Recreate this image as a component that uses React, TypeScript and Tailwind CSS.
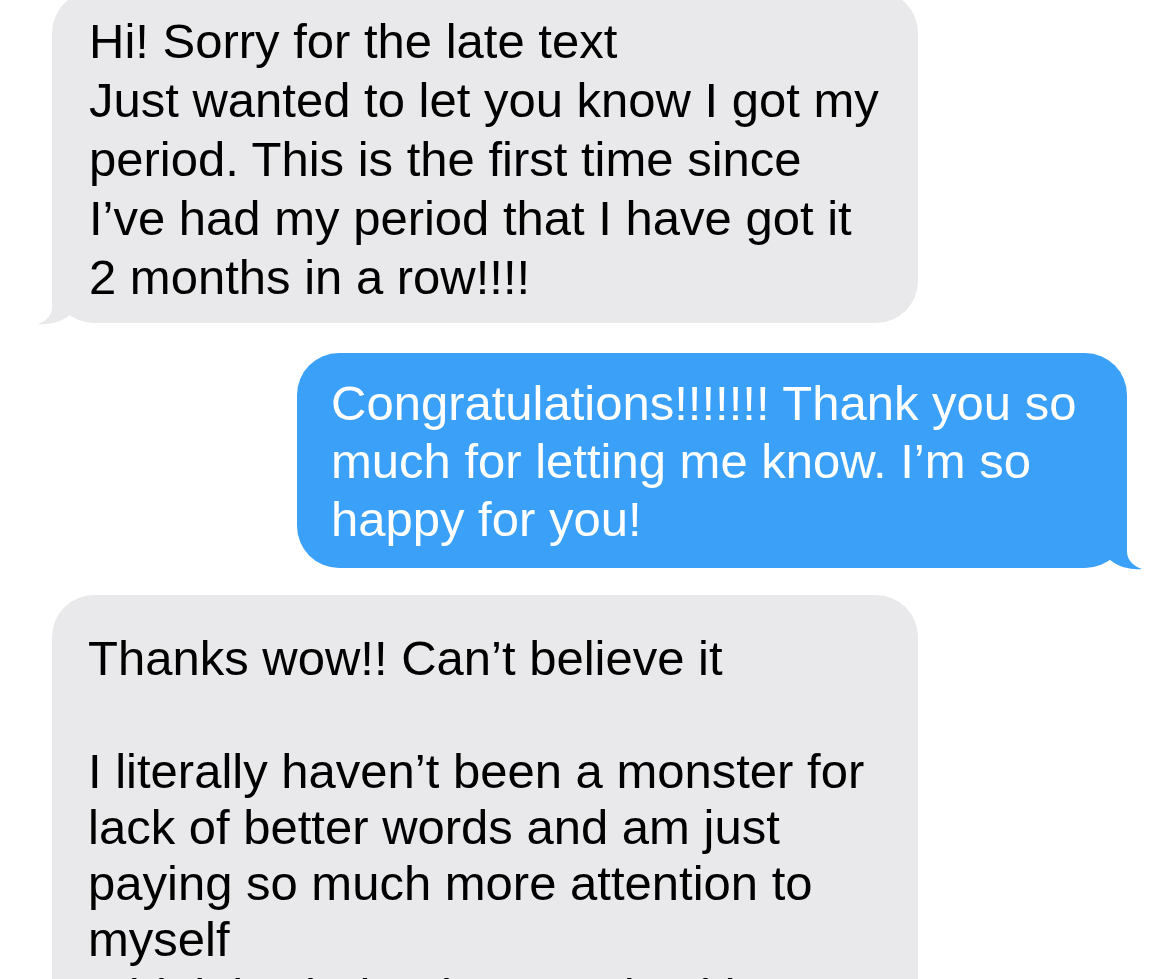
import React from "react";

type Side = "left" | "right";

// bubble tail; the notch side is left open so the bubble's own rounded corner shows
function Tail({ side, color }: { side: Side; color: string }) {
  if (side === "left") {
    return (
      <svg
        className="absolute left-[-14px] bottom-[-2px]"
        width="52"
        height="47"
        viewBox="0 0 52 47"
        aria-hidden="true"
      >
        <path
          d="M14 0 L14 28 C14 37 9 43 0 46 C9 47 22 45 32 37 L32 0 Z"
          fill={color}
        />
      </svg>
    );
  }
  return (
    <svg
      className="absolute right-[-15px] bottom-[-2px]"
      width="52"
      height="47"
      viewBox="0 0 52 47"
      aria-hidden="true"
    >
      <path
        d="M37 0 L37 28 C37 37 43 43 52 46 C43 47 30 45 20 37 L20 0 Z"
        fill={color}
      />
    </svg>
  );
}

const font = { fontFamily: '"Liberation Sans", Arial, sans-serif' };

export default function App() {
  return (
    <main
      className="w-[1159px] h-[979px] overflow-hidden bg-white flex flex-col"
      style={font}
    >
      {/* incoming */}
      <div className="relative ml-[52px] mt-[-9px] w-[866px] rounded-[42px] bg-[#e9e9eb] pl-[37px] pt-[21px] pb-[16px] text-[49px] leading-[59px] text-black">
        <p className="whitespace-pre">Hi! Sorry for the late text</p>
        <p className="whitespace-pre">Just wanted to let you know I got my</p>
        <p className="whitespace-pre">period. This is the first time since</p>
        <p className="whitespace-pre">I’ve had my period that I have got it</p>
        <p className="whitespace-pre">2 months in a row!!!!</p>
        <Tail side="left" color="#e9e9eb" />
      </div>

      {/* outgoing */}
      <div className="relative ml-[297px] mt-[30px] w-[830px] rounded-[42px] bg-[#3ba1f8] pl-[34px] pt-[21px] pb-[20px] text-[49px] leading-[58px] text-white">
        <p className="whitespace-pre">Congratulations!!!!!!! Thank you so</p>
        <p className="whitespace-pre">much for letting me know. I’m so</p>
        <p className="whitespace-pre">happy for you!</p>
        <Tail side="right" color="#3ba1f8" />
      </div>

      {/* incoming, runs off the bottom */}
      <div className="relative ml-[52px] mt-[27px] w-[866px] shrink-0 rounded-t-[42px] bg-[#e9e9eb] pl-[36px] pt-[35px] pb-[40px] text-[49px] leading-[56.3px] text-black">
        <p className="whitespace-pre">Thanks wow!! Can’t believe it</p>
        <p className="whitespace-pre">&nbsp;</p>
        <p className="whitespace-pre">I literally haven’t been a monster for</p>
        <p className="whitespace-pre">lack of better words and am just</p>
        <p className="whitespace-pre">paying so much more attention to</p>
        <p className="whitespace-pre">myself</p>
        <p className="whitespace-pre">I think it’s helped so much with stress</p>
      </div>
    </main>
  );
}
